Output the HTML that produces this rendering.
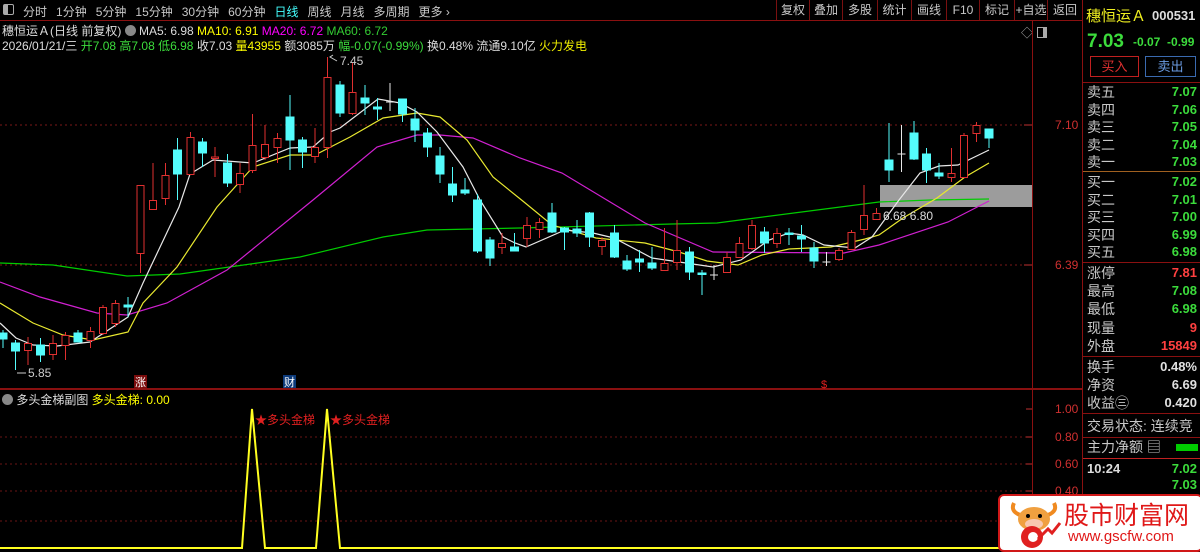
<!DOCTYPE html>
<html><head><meta charset="utf-8"><style>
*{margin:0;padding:0;box-sizing:border-box}
body{width:1200px;height:550px;background:#000;overflow:hidden;position:relative;font-family:"Liberation Sans","Noto Sans CJK SC",sans-serif;font-size:12px;color:#c8c8c8}
.a{position:absolute;white-space:nowrap}
.tabs span{margin-right:9px}
.btn{position:absolute;top:0;height:20px;border-left:1px solid #7a1010;line-height:20px;color:#c8c8c8;font-size:12px;text-align:center;white-space:nowrap;overflow:hidden}
.row{position:absolute;left:1087px;width:110px;height:18px;font-size:14px;line-height:18px;color:#c8c8c8}
.row b{position:absolute;right:0;font-weight:bold;font-size:13px}
.g{color:#3cdc3c}.r{color:#ff4040}.w{color:#e0e0e0}
.hl{position:absolute;left:1083px;width:117px;height:1px;background:#8a1010}
</style></head><body>
<div class="a" style="left:0;top:0;width:1083px;height:21px;border-bottom:1px solid #8a1010"></div>
<div class="a" style="left:3px;top:4px;width:11px;height:11px;border:1px solid #aaa;border-radius:2px"><div style="width:4px;height:9px;background:#aaa"></div></div>
<div class="a tabs" style="left:23px;top:3px;font-size:12px;color:#c8c8c8"><span>分时</span><span>1分钟</span><span>5分钟</span><span>15分钟</span><span>30分钟</span><span>60分钟</span><span style="color:#4ff">日线</span><span>周线</span><span>月线</span><span>多周期</span><span>更多 ›</span></div>
<div class="btn" style="left:776px;width:33px">复权</div><div class="btn" style="left:809px;width:33px">叠加</div><div class="btn" style="left:842px;width:35px">多股</div><div class="btn" style="left:877px;width:34px">统计</div><div class="btn" style="left:911px;width:35px">画线</div><div class="btn" style="left:946px;width:33px">F10</div><div class="btn" style="left:979px;width:35px">标记</div><div class="btn" style="left:1014px;width:33px">+自选</div><div class="btn" style="left:1047px;width:35px">返回</div>
<div class="a" style="left:1021px;top:24px;color:#aaa;font-size:12px">◇</div>
<div class="a" style="left:1037px;top:27px;width:10px;height:11px;border:1px solid #aaa"><div style="margin-left:5px;width:3px;height:9px;background:#aaa"></div></div>
<div class="a" style="left:2px;top:22px;font-size:12px;color:#ddd">穗恒运Ａ(日线 前复权) <span style="display:inline-block;width:11px;height:11px;border-radius:50%;background:#888;vertical-align:-1px"></span> MA5: 6.98 <span style="color:#ff0">MA10: 6.91</span> <span style="color:#f0f">MA20: 6.72</span> <span style="color:#3c3">MA60: 6.72</span></div>
<div class="a" style="left:2px;top:37px;font-size:12px;color:#ddd">2026/01/21/三 <span class="g">开7.08 高7.08 低6.98</span> 收7.03 <span style="color:#ff0">量43955</span> 额3085万 <span class="g">幅-0.07(-0.99%)</span> 换0.48% 流通9.10亿 <span style="color:#ee0">火力发电</span></div>
<svg class="a" style="left:0;top:0" width="1083" height="550" viewBox="0 0 1083 550">
<line x1="0" y1="125" x2="1032" y2="125" stroke="#7a1818" stroke-dasharray="2,3"/>
<line x1="0" y1="265" x2="1032" y2="265" stroke="#7a1818" stroke-dasharray="2,3"/>
<line x1="1032.5" y1="21" x2="1032.5" y2="550" stroke="#8a1010"/>
<line x1="0" y1="389" x2="1083" y2="389" stroke="#8a1010" stroke-width="2"/>
<line x1="1024" y1="125" x2="1032" y2="125" stroke="#c03030"/><line x1="1024" y1="265" x2="1032" y2="265" stroke="#c03030"/>
<rect x="880" y="185" width="152" height="22" fill="#9c9c9c"/>
<g fill="none" stroke-width="1.2">
<polyline stroke="#0c0" points="0,263 53,265 127,276 180,274 300,257 383,237 427,230 520,228 672,224 717,223 879,202 930,200 989,199"/>
<polyline stroke="#d020d0" points="0,282 40,297 97,313 127,315 167,303 227,270 313,200 377,147 417,135 440,135 473,138 520,158 562,173 645,223 713,252 844,253 879,245 948,222 989,201"/>
<polyline stroke="#e8e830" points="0,303 33,323 63,335 93,340 128,332 143,303 177,267 217,207 253,167 290,155 315,155 350,137 383,118 417,113 440,117 467,140 493,177 524,202 552,225 596,238 645,243 679,252 707,261 738,265 762,255 789,249 831,247 865,239 879,235 903,218 937,198 965,177 989,163"/>
<polyline stroke="#e8e8e8" points="0,323 16,338 33,345 57,346 90,342 128,317 143,283 179,207 190,174 213,160 253,163 290,148 313,147 330,132 340,128 378,99 400,103 417,112 437,132 463,167 480,200 503,237 515,243 526,247 565,230 593,233 614,238 652,258 713,267 741,260 769,240 789,233 803,235 824,245 855,248 872,237 899,200 920,173 939,166 958,165 989,150"/>
</g>
<g stroke-width="1">
<g stroke="#54fcfc" fill="#54fcfc">
<line x1="3" y1="330" x2="3" y2="348"/><rect x="-1" y="333" width="8" height="6"/>
<line x1="15.5" y1="340" x2="15.5" y2="370"/><rect x="11.5" y="343" width="8" height="8"/>
<line x1="40.5" y1="338" x2="40.5" y2="362"/><rect x="36.5" y="345" width="8" height="10"/>
<line x1="78" y1="330" x2="78" y2="342"/><rect x="74" y="333" width="8" height="9"/>
<line x1="128" y1="297" x2="128" y2="317"/><rect x="124" y="305" width="8" height="2"/>
<line x1="177.5" y1="138" x2="177.5" y2="200"/><rect x="173.5" y="150" width="8" height="24"/>
<line x1="202.5" y1="138" x2="202.5" y2="167"/><rect x="198.5" y="142" width="8" height="11"/>
<line x1="227.5" y1="154" x2="227.5" y2="187"/><rect x="223.5" y="163" width="8" height="20"/>
<line x1="290" y1="95" x2="290" y2="170"/><rect x="286" y="117" width="8" height="23"/>
<line x1="302.5" y1="137" x2="302.5" y2="168"/><rect x="298.5" y="140" width="8" height="12"/>
<line x1="340" y1="81" x2="340" y2="117"/><rect x="336" y="85" width="8" height="28"/>
<line x1="365" y1="85" x2="365" y2="115"/><rect x="361" y="98" width="8" height="5"/>
<line x1="377.5" y1="98" x2="377.5" y2="120"/><rect x="373.5" y="107" width="8" height="2"/>
<line x1="402.5" y1="99" x2="402.5" y2="122"/><rect x="398.5" y="99" width="8" height="15"/>
<line x1="415" y1="108" x2="415" y2="142"/><rect x="411" y="119" width="8" height="11"/>
<line x1="427.5" y1="128" x2="427.5" y2="157"/><rect x="423.5" y="133" width="8" height="14"/>
<line x1="440" y1="147" x2="440" y2="183"/><rect x="436" y="156" width="8" height="18"/>
<line x1="452.5" y1="167" x2="452.5" y2="202"/><rect x="448.5" y="184" width="8" height="11"/>
<line x1="465" y1="178" x2="465" y2="195"/><rect x="461" y="190" width="8" height="3"/>
<line x1="477.5" y1="194" x2="477.5" y2="253"/><rect x="473.5" y="200" width="8" height="51"/>
<line x1="490" y1="237" x2="490" y2="266"/><rect x="486" y="240" width="8" height="18"/>
<line x1="514.5" y1="233" x2="514.5" y2="250"/><rect x="510.5" y="247" width="8" height="4"/>
<line x1="552" y1="203" x2="552" y2="233"/><rect x="548" y="213" width="8" height="19"/>
<line x1="564.5" y1="227" x2="564.5" y2="250"/><rect x="560.5" y="228" width="8" height="4"/>
<line x1="577" y1="220" x2="577" y2="237"/><rect x="573" y="229" width="8" height="4"/>
<line x1="589.5" y1="212" x2="589.5" y2="247"/><rect x="585.5" y="213" width="8" height="24"/>
<line x1="614.5" y1="225" x2="614.5" y2="258"/><rect x="610.5" y="233" width="8" height="24"/>
<line x1="627" y1="255" x2="627" y2="271"/><rect x="623" y="261" width="8" height="8"/>
<line x1="639.5" y1="250" x2="639.5" y2="272"/><rect x="635.5" y="259" width="8" height="3"/>
<line x1="652" y1="247" x2="652" y2="270"/><rect x="648" y="263" width="8" height="5"/>
<line x1="689.5" y1="247" x2="689.5" y2="280"/><rect x="685.5" y="252" width="8" height="20"/>
<line x1="702" y1="270" x2="702" y2="295"/><rect x="698" y="273" width="8" height="1.5"/>
<line x1="764.5" y1="227" x2="764.5" y2="253"/><rect x="760.5" y="232" width="8" height="11"/>
<line x1="789" y1="228" x2="789" y2="245"/><rect x="785" y="233" width="8" height="1.5"/>
<line x1="801.5" y1="225" x2="801.5" y2="252"/><rect x="797.5" y="236" width="8" height="3"/>
<line x1="814" y1="242" x2="814" y2="268"/><rect x="810" y="248" width="8" height="13"/>
<line x1="889" y1="123" x2="889" y2="182"/><rect x="885" y="160" width="8" height="10"/>
<line x1="914" y1="121" x2="914" y2="160"/><rect x="910" y="133" width="8" height="26"/>
<line x1="926.5" y1="148" x2="926.5" y2="183"/><rect x="922.5" y="154" width="8" height="16"/>
<line x1="939" y1="163" x2="939" y2="179"/><rect x="935" y="173" width="8" height="3"/>
<line x1="989" y1="129" x2="989" y2="148"/><rect x="985" y="129" width="8" height="9"/>
</g>
<g stroke="#e8e8e8">
<line x1="390" y1="83" x2="390" y2="111"/><line x1="386" y1="102" x2="394" y2="102"/>
<line x1="714" y1="265" x2="714" y2="280"/><line x1="710" y1="275" x2="718" y2="275"/>
<line x1="826.5" y1="252" x2="826.5" y2="266"/><line x1="822.5" y1="262" x2="830.5" y2="262"/>
<line x1="901.5" y1="125" x2="901.5" y2="172"/><line x1="897.5" y1="154" x2="905.5" y2="154"/>
</g>
<g stroke="#e03030" fill="#000">
<line x1="28" y1="337" x2="28" y2="365"/><rect x="24.5" y="343.5" width="7" height="7"/>
<line x1="53" y1="335" x2="53" y2="360"/><rect x="49.5" y="343.5" width="7" height="11"/>
<line x1="65.5" y1="332" x2="65.5" y2="360"/><rect x="62" y="335.5" width="7" height="10"/>
<line x1="90.5" y1="327" x2="90.5" y2="348"/><rect x="87" y="331.5" width="7" height="9"/>
<line x1="103" y1="305" x2="103" y2="335"/><rect x="99.5" y="307.5" width="7" height="26"/>
<line x1="115.5" y1="300" x2="115.5" y2="327"/><rect x="112" y="303.5" width="7" height="20"/>
<line x1="140.5" y1="185" x2="140.5" y2="273"/><rect x="137" y="185.5" width="7" height="68"/>
<line x1="153" y1="163" x2="153" y2="210"/><rect x="149.5" y="200.5" width="7" height="9"/>
<line x1="165.5" y1="163" x2="165.5" y2="205"/><rect x="162" y="175.5" width="7" height="23"/>
<line x1="190.5" y1="132" x2="190.5" y2="175"/><rect x="187" y="137.5" width="7" height="37"/>
<line x1="215" y1="147" x2="215" y2="177"/><rect x="211.5" y="157" width="7" height="1.5"/>
<line x1="240" y1="163" x2="240" y2="193"/><rect x="236.5" y="173.5" width="7" height="11"/>
<line x1="252.5" y1="114" x2="252.5" y2="173"/><rect x="249" y="145.5" width="7" height="25"/>
<line x1="265" y1="125" x2="265" y2="160"/><rect x="261.5" y="144.5" width="7" height="13"/>
<line x1="277.5" y1="133" x2="277.5" y2="163"/><rect x="274" y="138.5" width="7" height="9"/>
<line x1="315" y1="128" x2="315" y2="163"/><rect x="311.5" y="147.5" width="7" height="9"/>
<line x1="327.5" y1="57" x2="327.5" y2="158"/><rect x="324" y="77.5" width="7" height="70"/>
<line x1="352.5" y1="63" x2="352.5" y2="115"/><rect x="349" y="92.5" width="7" height="21"/>
<line x1="502" y1="233" x2="502" y2="254"/><rect x="498.5" y="243.5" width="7" height="4"/>
<line x1="527" y1="217" x2="527" y2="247"/><rect x="523.5" y="225.5" width="7" height="13"/>
<line x1="539.5" y1="218" x2="539.5" y2="238"/><rect x="536" y="222.5" width="7" height="7"/>
<line x1="602" y1="237" x2="602" y2="255"/><rect x="598.5" y="240.5" width="7" height="6"/>
<line x1="664.5" y1="228" x2="664.5" y2="270"/><rect x="661" y="263.5" width="7" height="7"/>
<line x1="677" y1="220" x2="677" y2="270"/><rect x="673.5" y="250.5" width="7" height="12"/>
<line x1="727" y1="252" x2="727" y2="273"/><rect x="723.5" y="257.5" width="7" height="15"/>
<line x1="739.5" y1="237" x2="739.5" y2="258"/><rect x="736" y="243.5" width="7" height="14"/>
<line x1="752" y1="220" x2="752" y2="250"/><rect x="748.5" y="225.5" width="7" height="23"/>
<line x1="777" y1="228" x2="777" y2="248"/><rect x="773.5" y="233.5" width="7" height="10"/>
<line x1="839" y1="248" x2="839" y2="261"/><rect x="835.5" y="250.5" width="7" height="9"/>
<line x1="851.5" y1="230" x2="851.5" y2="250"/><rect x="848" y="232.5" width="7" height="17"/>
<line x1="864" y1="185" x2="864" y2="235"/><rect x="860.5" y="215.5" width="7" height="14"/>
<line x1="876.5" y1="208" x2="876.5" y2="220"/><rect x="873" y="213.5" width="7" height="6"/>
<line x1="951.5" y1="148" x2="951.5" y2="182"/><rect x="948" y="173.5" width="7" height="4"/>
<line x1="964" y1="133" x2="964" y2="178"/><rect x="960.5" y="135.5" width="7" height="42"/>
<line x1="976.5" y1="122" x2="976.5" y2="142"/><rect x="973" y="125.5" width="7" height="8"/>
</g>
</g>
<text x="340" y="65" fill="#ccc" font-size="12" font-family="Liberation Sans">7.45</text><polyline points="337,61 330,57 333,55" fill="none" stroke="#ccc"/>
<text x="28" y="377" fill="#ccc" font-size="12" font-family="Liberation Sans">5.85</text><line x1="17" y1="373" x2="26" y2="373" stroke="#ccc"/>
<text x="883" y="220" fill="#ddd" font-size="12" font-family="Liberation Sans">6.68  6.80</text>
<text x="1055" y="129" fill="#d03030" font-size="12" font-family="Liberation Sans">7.10</text>
<text x="1055" y="269" fill="#d03030" font-size="12" font-family="Liberation Sans">6.39</text>
<rect x="134" y="375" width="13" height="13" fill="#7a0c0c"/><text x="135" y="386" fill="#fff" font-size="11" font-family="Noto Sans CJK SC">涨</text>
<rect x="283" y="375" width="13" height="13" fill="#0c3a7a"/><text x="284" y="386" fill="#fff" font-size="11" font-family="Noto Sans CJK SC">财</text>
<text x="821" y="388" fill="#e02020" font-size="11" font-family="Liberation Sans">$</text>
<g stroke="#6a1414" stroke-dasharray="2,3"><line x1="0" y1="437" x2="1032" y2="437"/><line x1="0" y1="464" x2="1032" y2="464"/><line x1="0" y1="491" x2="1032" y2="491"/><line x1="0" y1="521" x2="1032" y2="521"/></g>
<g stroke="#c03030"><line x1="1026" y1="409" x2="1032" y2="409"/><line x1="1026" y1="437" x2="1032" y2="437"/><line x1="1026" y1="464" x2="1032" y2="464"/><line x1="1026" y1="491" x2="1032" y2="491"/></g>
<g fill="#d03030" font-size="12" font-family="Liberation Sans"><text x="1055" y="413">1.00</text><text x="1055" y="441">0.80</text><text x="1055" y="468">0.60</text><text x="1055" y="495">0.40</text></g>
<polyline points="0,548 242,548 252,409 265,548 316,548 327,409 340,548 1032,548" fill="none" stroke="#ffff20" stroke-width="2"/>
<text x="255" y="424" fill="#e02020" font-size="12" font-family="Noto Sans CJK SC">★多头金梯</text>
<text x="330" y="424" fill="#e02020" font-size="12" font-family="Noto Sans CJK SC">★多头金梯</text>
</svg>
<div class="a" style="left:2px;top:391px;font-size:12px;color:#ddd"><span style="display:inline-block;width:11px;height:11px;border-radius:50%;background:#888;vertical-align:-1px"></span> 多头金梯副图 <span style="color:#ff0">多头金梯: 0.00</span></div>
<div class="a" style="left:1082px;top:0;width:1px;height:550px;background:#8a1010"></div>
<div class="a" style="left:1086px;top:5px;font-size:15px;color:#f0f020">穗恒运Ａ</div>
<div class="a" style="left:1152px;top:8px;font-size:13px;font-weight:bold;color:#ddd">000531</div>
<div class="a" style="left:1087px;top:31px;font-size:19px;font-weight:bold;color:#3cdc3c">7.03</div>
<div class="a" style="left:1133px;top:35px;font-size:12px;font-weight:bold;color:#3cdc3c">-0.07 &nbsp;-0.99</div>
<div class="a" style="left:1090px;top:56px;width:49px;height:21px;border:1px solid #c02020;color:#e03030;font-size:13px;text-align:center;line-height:19px">买入</div>
<div class="a" style="left:1145px;top:56px;width:51px;height:21px;border:1px solid #3a6ab0;color:#6a9ae0;font-size:13px;text-align:center;line-height:19px">卖出</div>
<div class="hl" style="top:82px"></div>
<div class="row" style="top:83px">卖五<b class="g">7.07</b></div>
<div class="row" style="top:101px">卖四<b class="g">7.06</b></div>
<div class="row" style="top:118px">卖三<b class="g">7.05</b></div>
<div class="row" style="top:136px">卖二<b class="g">7.04</b></div>
<div class="row" style="top:153px">卖一<b class="g">7.03</b></div>
<div class="hl" style="top:171px;background:#a06020"></div>
<div class="row" style="top:173px">买一<b class="g">7.02</b></div>
<div class="row" style="top:191px">买二<b class="g">7.01</b></div>
<div class="row" style="top:208px">买三<b class="g">7.00</b></div>
<div class="row" style="top:226px">买四<b class="g">6.99</b></div>
<div class="row" style="top:243px">买五<b class="g">6.98</b></div>
<div class="hl" style="top:262px"></div>
<div class="row" style="top:264px">涨停<b class="r">7.81</b></div>
<div class="row" style="top:282px">最高<b class="g">7.08</b></div>
<div class="row" style="top:300px">最低<b class="g">6.98</b></div>
<div class="row" style="top:319px">现量<b class="r">9</b></div>
<div class="row" style="top:337px">外盘<b class="r">15849</b></div>
<div class="hl" style="top:356px"></div>
<div class="row" style="top:358px">换手<b class="w">0.48%</b></div>
<div class="row" style="top:376px">净资<b class="w">6.69</b></div>
<div class="row" style="top:394px">收益㊂<b class="w">0.420</b></div>
<div class="hl" style="top:413px"></div>
<div class="row" style="top:417px;width:115px;overflow:hidden">交易状态: 连续竞</div>
<div class="hl" style="top:437px"></div>
<div class="row" style="top:438px">主力净额 ▤</div>
<div class="a" style="left:1176px;top:444px;width:22px;height:7px;background:#0c0"></div>
<div class="hl" style="top:458px;background:#c02020"></div>
<div class="row" style="top:460px;font-weight:bold;font-size:13px;color:#ddd">10:24<b class="g">7.02</b></div>
<div class="row" style="top:476px"><b class="g">7.03</b></div>
<div class="a" style="left:998px;top:494px;width:205px;height:58px;background:#fff;border:2px solid #d01818;border-radius:6px"></div>
<svg class="a" style="left:1008px;top:497px" width="56" height="53" viewBox="0 0 56 53">
<path d="M6 6 Q2 14 12 18 M46 6 Q50 14 40 18" stroke="#f08a20" stroke-width="4" fill="none"/>
<ellipse cx="26" cy="22" rx="16" ry="12" fill="#f0a040"/>
<ellipse cx="26" cy="27" rx="9" ry="5" fill="#f8c8b0"/>
<circle cx="20" cy="19" r="2" fill="#000"/><circle cx="32" cy="19" r="2" fill="#000"/>
<circle cx="24" cy="40" r="11" fill="#e02020"/><circle cx="25" cy="40" r="5" fill="#fff"/>
<path d="M30 42 L40 32 L44 36 L52 26" stroke="#e02020" stroke-width="3" fill="none"/>
</svg>
<div class="a" style="left:1064px;top:499px;font-size:25px;color:#e01818;font-family:'Noto Sans CJK SC',sans-serif;line-height:30px">股市财富网</div>
<div class="a" style="left:1068px;top:528px;font-size:15px;color:#e01818;line-height:18px">www.gscfw.com</div>
</body></html>
